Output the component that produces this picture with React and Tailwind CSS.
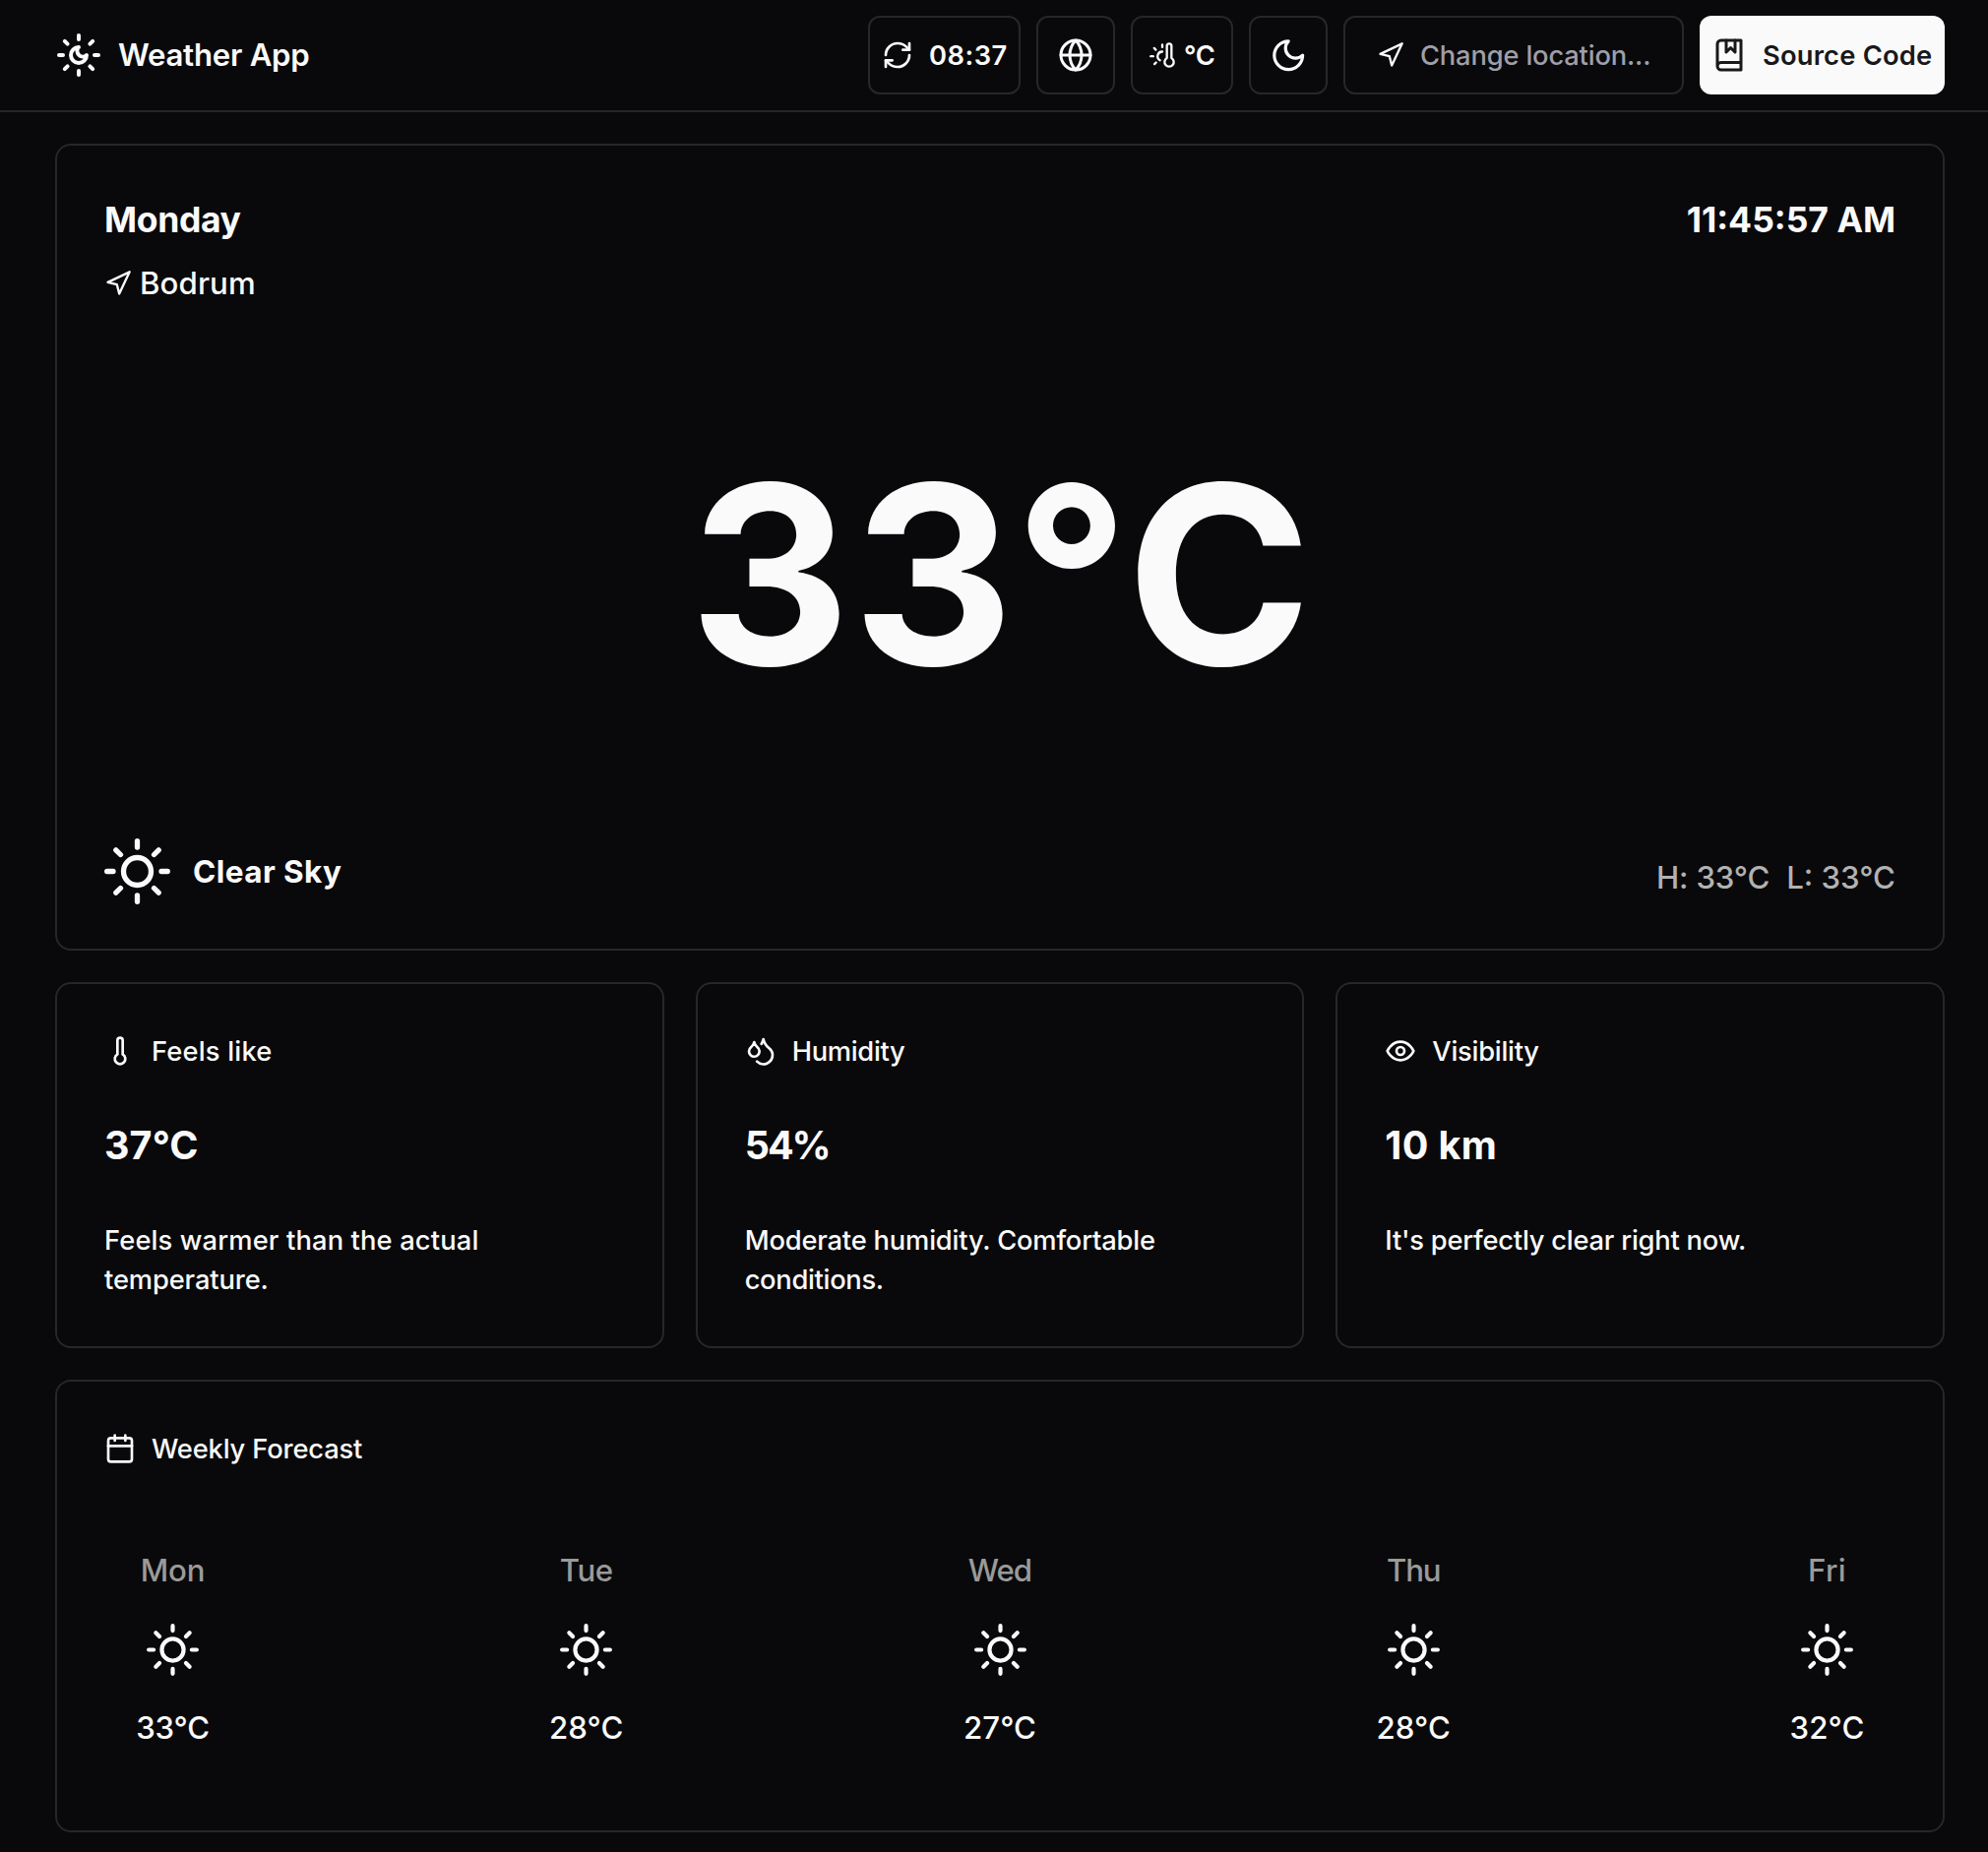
function Icon({ className, strokeWidth = 2, children }) {
  return (
    <svg
      viewBox="0 0 24 24"
      fill="none"
      stroke="currentColor"
      strokeWidth={strokeWidth}
      strokeLinecap="round"
      strokeLinejoin="round"
      className={`shrink-0 ${className}`}
    >
      {children}
    </svg>
  );
}

const LogoIcon = (p) => (
  <Icon {...p}>
    <path d="M12 2v2" />
    <path d="M12 8a2.83 2.83 0 0 0 4 4 4 4 0 1 1-4-4" />
    <path d="M12 20v2" />
    <path d="m4.9 4.9 1.4 1.4" />
    <path d="m17.7 17.7 1.4 1.4" />
    <path d="M2 12h2" />
    <path d="M20 12h2" />
    <path d="m6.3 17.7-1.4 1.4" />
    <path d="m19.1 4.9-1.4 1.4" />
  </Icon>
);

const RefreshIcon = (p) => (
  <Icon {...p}>
    <path d="M3 12a9 9 0 0 1 9-9 9.75 9.75 0 0 1 6.74 2.74L21 8" />
    <path d="M21 3v5h-5" />
    <path d="M21 12a9 9 0 0 1-9 9 9.75 9.75 0 0 1-6.74-2.74L3 16" />
    <path d="M8 16H3v5" />
  </Icon>
);

const GlobeIcon = (p) => (
  <Icon {...p}>
    <circle cx="12" cy="12" r="10" />
    <path d="M12 2a14.5 14.5 0 0 0 0 20 14.5 14.5 0 0 0 0-20" />
    <path d="M2 12h20" />
  </Icon>
);

const ThermometerSunIcon = (p) => (
  <Icon {...p}>
    <path d="M12 9a4 4 0 0 0-2 7.5" />
    <path d="M12 3v2" />
    <path d="m6.6 18.4-1.4 1.4" />
    <path d="M20 4v10.54a4 4 0 1 1-4 0V4a2 2 0 0 1 4 0Z" />
    <path d="M4 13H2" />
    <path d="M6.34 7.34 4.93 5.93" />
  </Icon>
);

const MoonIcon = (p) => (
  <Icon {...p}>
    <path d="M12 3a6 6 0 0 0 9 9 9 9 0 1 1-9-9Z" />
  </Icon>
);

const NavigationIcon = (p) => (
  <Icon {...p}>
    <polygon points="3 11 22 2 13 21 11 13 3 11" />
  </Icon>
);

const BookIcon = (p) => (
  <Icon {...p}>
    <path d="M4 19.5v-15A2.5 2.5 0 0 1 6.5 2H20v20H6.5a2.5 2.5 0 0 1 0-5H20" />
    <polyline points="10 2 10 10 13 7 16 10 16 2" />
  </Icon>
);

const ThermometerIcon = (p) => (
  <Icon {...p}>
    <path d="M14 4v10.54a4 4 0 1 1-4 0V4a2 2 0 0 1 4 0Z" />
  </Icon>
);

const DropletsIcon = (p) => (
  <Icon {...p}>
    <path d="M7 16.3c2.2 0 4-1.83 4-4.05 0-1.16-.57-2.26-1.71-3.19S7.29 6.75 7 5.3c-.29 1.45-1.14 2.84-2.29 3.76S3 11.1 3 12.25c0 2.22 1.8 4.05 4 4.05z" />
    <path d="M12.56 6.6A10.97 10.97 0 0 0 14 3.02c.5 2.5 2 4.9 4 6.5s3 3.5 3 5.5a6.98 6.98 0 0 1-11.91 4.97" />
  </Icon>
);

const EyeIcon = (p) => (
  <Icon {...p}>
    <path d="M2 12s3-7 10-7 10 7 10 7-3 7-10 7-10-7-10-7Z" />
    <circle cx="12" cy="12" r="3" />
  </Icon>
);

const CalendarIcon = (p) => (
  <Icon {...p}>
    <path d="M8 2v4" />
    <path d="M16 2v4" />
    <rect x="3" y="4" width="18" height="18" rx="2" />
    <path d="M3 10h18" />
  </Icon>
);

const SunIcon = ({ className }) => (
  <svg
    viewBox="-33.5 -33.5 67 67"
    fill="none"
    stroke="currentColor"
    strokeWidth="5.3"
    strokeLinecap="round"
    className={`shrink-0 ${className}`}
  >
    <circle r="14" />
    <path d="M0-30.8v6.3M0 24.5v6.3M-30.8 0h6.3M24.5 0h6.3M-21.7-21.7l4.7 4.7M17 17l4.7 4.7M-21.7 21.7l4.7-4.7M17-17l4.7-4.7" />
  </svg>
);

const metrics = [
  {
    icon: ThermometerIcon,
    title: "Feels like",
    titleClass: "tracking-[0.2px]",
    value: "37°C",
    valueClass: "tracking-[0.1px]",
    lines: [
      ["Feels warmer than the actual", "tracking-[0.14px]"],
      ["temperature.", "tracking-[-0.12px]"],
    ],
  },
  {
    icon: DropletsIcon,
    title: "Humidity",
    titleClass: "tracking-[-0.3px]",
    value: "54%",
    valueClass: "tracking-[-2px]",
    lines: [
      ["Moderate humidity. Comfortable", "tracking-[-0.18px]"],
      ["conditions.", "tracking-[-0.3px]"],
    ],
  },
  {
    icon: EyeIcon,
    title: "Visibility",
    titleClass: "tracking-[-0.25px]",
    value: "10 km",
    valueClass: "tracking-[0.4px]",
    lines: [["It's perfectly clear right now.", "tracking-[-0.22px]"]],
  },
];

const week = [
  ["Mon", "tracking-[-0.2px]", "33°C", "tracking-[-0.2px]"],
  ["Tue", "tracking-[-0.4px]", "28°C", "tracking-[0.1px]"],
  ["Wed", "tracking-[-1px]", "27°C", "tracking-[0.1px]"],
  ["Thu", "tracking-[-1.2px]", "28°C", "tracking-[0.1px]"],
  ["Fri", "tracking-[0.4px]", "32°C", "tracking-[0.1px]"],
];

function Header() {
  return (
    <header className="flex h-[114px] items-center justify-between border-b-2 border-zinc-800 pr-11 pl-14">
      <div className="flex items-center gap-4">
        <LogoIcon className="size-12" />
        <span className="text-[31.2px] leading-[48px] font-semibold tracking-[-0.26px]">Weather App</span>
      </div>
      <div className="flex gap-4 text-[27.3px] leading-10 font-semibold whitespace-nowrap">
        <button className="flex h-20 w-[155px] items-center gap-4 rounded-xl border-2 border-zinc-800 pl-3">
          <RefreshIcon className="size-8" />
          <span className="mt-0.5 tracking-[0.5px]">08:37</span>
        </button>
        <button className="flex size-20 items-center justify-center rounded-xl border-2 border-zinc-800">
          <GlobeIcon className="size-9" />
        </button>
        <button className="flex h-20 w-[104px] items-center gap-2 rounded-xl border-2 border-zinc-800 pl-4">
          <ThermometerSunIcon className="size-7" />
          <span className="mt-0.5 tracking-[-0.4px]">°C</span>
        </button>
        <button className="flex size-20 items-center justify-center rounded-xl border-2 border-zinc-800">
          <MoonIcon className="size-[38.4px]" />
        </button>
        <button className="flex h-20 w-[346px] items-center gap-4 rounded-xl border-2 border-zinc-800 pl-8">
          <NavigationIcon className="size-7" />
          <span className="mt-0.5 font-[550] tracking-[-0.17px] text-zinc-400">Change location...</span>
        </button>
        <button className="flex h-20 w-[249px] items-center gap-4 rounded-xl bg-neutral-50 pl-3 text-zinc-900">
          <BookIcon className="size-9" />
          <span className="mt-0.5 tracking-[0.2px]">Source Code</span>
        </button>
      </div>
    </header>
  );
}

function CurrentWeather() {
  return (
    <section className="flex h-[820px] flex-col justify-between rounded-2xl border-2 border-zinc-800 p-12">
      <div>
        <div className="flex justify-between pt-px text-[35.5px] leading-[54px] font-bold">
          <span className="tracking-[-0.35px]">Monday</span>
          <span className="tracking-[0px]">11:45:57 AM</span>
        </div>
        <div className="mt-[13px] flex items-center gap-2 text-[31.2px] leading-[48px] font-[450]">
          <NavigationIcon className="size-7" />
          <span className="tracking-[0.1px]">Bodrum</span>
        </div>
      </div>
      <div className="flex h-64 items-center justify-center pl-[3px] text-[254px] leading-none font-[750] tracking-[2px]">
        33°C
      </div>
      <div className="flex items-end justify-between">
        <div className="flex h-[61px] items-center gap-[23px]">
          <SunIcon className="size-[67px]" />
          <span className="text-[31.5px] leading-[48px] font-bold tracking-[0.42px]">Clear Sky</span>
        </div>
        <div className="flex gap-[17px] text-[31.2px] leading-[48px] font-[450] text-[#b2b2b2]">
          <span className="tracking-[-0.2px]">H: 33°C</span>
          <span className="tracking-[0px]">L: 33°C</span>
        </div>
      </div>
    </section>
  );
}

function MetricCard({ icon: MetricIcon, title, titleClass, value, valueClass, lines }) {
  return (
    <section className="flex flex-col gap-12 rounded-2xl border-2 border-zinc-800 p-12">
      <div className="flex h-10 items-center gap-4 text-[27.3px] leading-10 font-[450]">
        <MetricIcon className="size-8" />
        <span className={`mt-0.5 ${titleClass}`}>{title}</span>
      </div>
      <div className={`text-[39.5px] leading-[56px] font-[650] ${valueClass}`}>{value}</div>
      <div className="h-20 pt-px text-[27.3px] leading-10 font-[450] whitespace-nowrap">
        {lines.map(([text, tracking]) => (
          <p key={text} className={tracking}>
            {text}
          </p>
        ))}
      </div>
    </section>
  );
}

function WeeklyForecast() {
  return (
    <section className="h-[460px] rounded-2xl border-2 border-zinc-800 p-12">
      <div className="flex h-10 items-center gap-4 text-[27.3px] leading-10 font-[450]">
        <CalendarIcon className="size-8" />
        <span className="mt-0.5 tracking-[-0.16px]">Weekly Forecast</span>
      </div>
      <div className="mt-20 flex justify-between text-[31.2px] leading-[48px] font-[450]">
        {week.map(([day, dayClass, temp, tempClass]) => (
          <div key={day} className="flex w-[139px] flex-col items-center">
            <span className={`text-[#9a9a9a] ${dayClass}`}>{day}</span>
            <div className="flex h-28 items-center">
              <SunIcon className="size-[53px]" />
            </div>
            <span className={tempClass}>{temp}</span>
          </div>
        ))}
      </div>
    </section>
  );
}

export default function App() {
  return (
    <div className="h-[1882px] w-[2020px] overflow-hidden bg-[#09090b] font-['Inter',sans-serif] text-neutral-50 antialiased">
      <Header />
      <main className="flex flex-col gap-8 pt-8 pr-11 pl-14">
        <CurrentWeather />
        <div className="grid grid-cols-3 gap-8">
          {metrics.map((m) => (
            <MetricCard key={m.title} {...m} />
          ))}
        </div>
        <WeeklyForecast />
      </main>
    </div>
  );
}
